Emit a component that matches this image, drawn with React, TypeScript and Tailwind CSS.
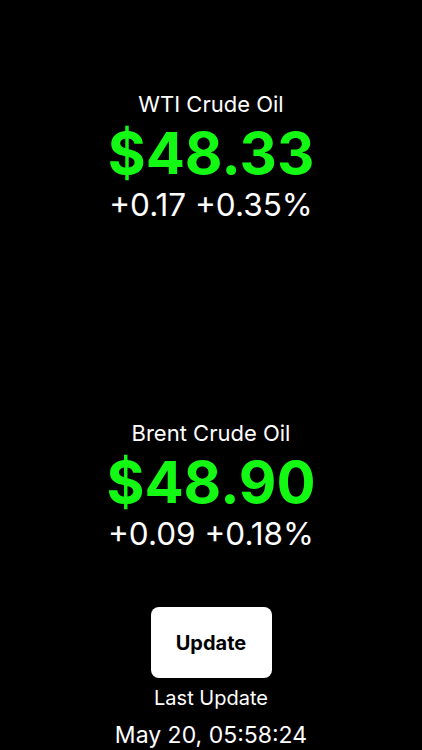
import React from "react";

interface Quote {
  name: string;
  price: string;
  change: string;
}

const quotes: Quote[] = [
  { name: "WTI Crude Oil", price: "$48.33", change: "+0.17 +0.35%" },
  { name: "Brent Crude Oil", price: "$48.90", change: "+0.09 +0.18%" },
];

function QuoteBlock({ quote, className }: { quote: Quote; className?: string }) {
  return (
    <div className={`flex flex-col items-center ${className ?? ""}`}>
      <div className="h-[28px] text-[22px] leading-[28px] text-white">{quote.name}</div>
      <div className="mt-[10px] h-[50px] text-[58px] font-bold leading-[50px] text-[#14f914]">
        {quote.price}
      </div>
      <div className="mt-[9px] h-[36px] text-[31.5px] leading-[36px] text-white">{quote.change}</div>
    </div>
  );
}

export default function App() {
  return (
    <div
      className="flex h-[750px] w-full flex-col items-center overflow-hidden bg-black pt-[90px]"
      style={{ fontFamily: 'Inter, "Liberation Sans", sans-serif' }}
    >
      <QuoteBlock quote={quotes[0]} />
      <QuoteBlock quote={quotes[1]} className="mt-[196px]" />

      <button className="mt-[55px] flex h-[71px] w-[121px] items-center justify-center rounded-[8px] bg-white text-[20px] font-bold text-black">
        Update
      </button>
      <div className="mt-[8px] h-[24px] text-[20px] leading-[24px] text-white">Last Update</div>
      <div className="mt-[11px] h-[28px] text-[23px] leading-[28px] text-white">May 20, 05:58:24</div>
    </div>
  );
}
